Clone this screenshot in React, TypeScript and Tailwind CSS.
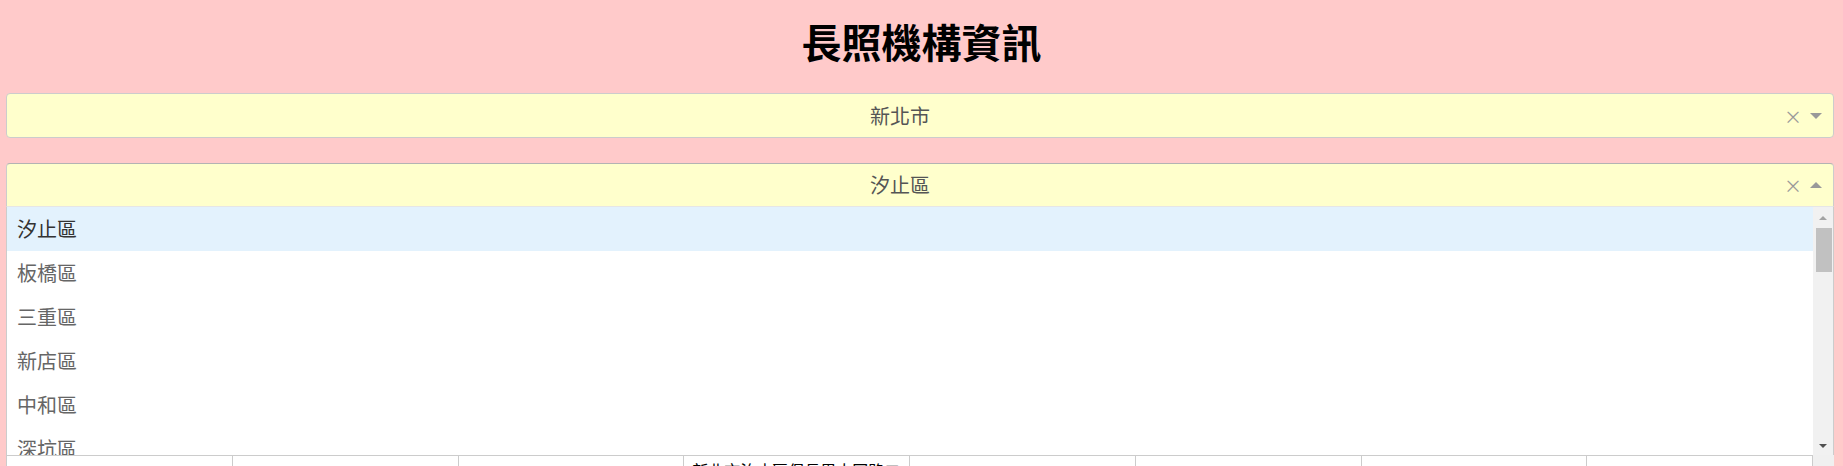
import React from "react";

const districts = [
  "汐止區", "板橋區", "三重區", "新店區", "中和區", "深坑區", "永和區", "土城區",
  "樹林區", "新莊區", "蘆洲區", "五股區", "泰山區", "林口區", "淡水區",
];

const rows = [
  ["A1234", "汐止長照中心", "居家服務", "新北市汐止區保長里大同路二段123號4樓", "02-2641-0000", "社團法人", "特約", "是"],
  ["A2345", "康寧日照中心", "日間照顧", "新北市汐止區康寧街100號", "02-2692-0000", "財團法人", "特約", "是"],
];

function ClearX() {
  return <span className="flex h-full w-[20px] items-center justify-center text-[18px] leading-none text-[#999]">×</span>;
}

function Arrow({ up }: { up?: boolean }) {
  return (
    <span className="flex h-full w-[25px] items-center justify-center">
      {up ? (
        <span className="h-0 w-0 border-x-[6px] border-b-[6px] border-x-transparent border-b-[#999]" />
      ) : (
        <span className="h-0 w-0 border-x-[6px] border-t-[6px] border-x-transparent border-t-[#999]" />
      )}
    </span>
  );
}

function Scrollbar() {
  return (
    <div className="flex w-[20px] flex-col bg-[#f1f1f1]">
      <div className="flex h-[21px] items-center justify-center">
        <span className="h-0 w-0 border-x-[4px] border-b-[4px] border-x-transparent border-b-[#a3a3a3]" />
      </div>
      <div className="ml-[3px] mr-[1px] h-[44px] bg-[#c1c1c1]" />
      <div className="flex-1" />
      <div className="flex h-[20px] items-center justify-center">
        <span className="h-0 w-0 border-x-[4px] border-t-[4px] border-x-transparent border-t-[#505050]" />
      </div>
    </div>
  );
}

export default function App() {
  return (
    <div className="min-h-screen bg-[#ffcaca] font-['Noto_Sans_CJK_TC','Noto_Sans_CJK_SC',sans-serif] text-[#333]">
      <h1 className="pt-[17px] mb-[28px] text-center text-[40px] leading-[48px] font-bold text-black">長照機構資訊</h1>

      <div className="ml-[6px] mr-[9px]">
        <div className="flex h-[45px] items-center rounded-[4px] border border-[#ccc] bg-[#ffffcc]">
          <div className="flex-1 pl-[10px] text-center text-[20px] text-[#555]">新北市</div>
          <ClearX />
          <Arrow />
          <span className="w-[5px]" />
        </div>

        <div className="relative mt-[25px]">
          <div className="flex h-[44px] items-center rounded-t-[4px] border border-[#b3b3b3] border-x-[#ccc] border-b-[#e6e6e6] bg-[#ffffcc]">
            <div className="flex-1 pl-[10px] text-center text-[20px] text-[#555]">汐止區</div>
            <ClearX />
            <Arrow up />
            <span className="w-[5px]" />
          </div>
          <div className="absolute left-0 right-0 top-full z-10 flex h-[250px] border-x border-b border-[#ccc] bg-white">
            <ul className="flex-1 overflow-hidden">
              {districts.map((d, i) => (
                <li
                  key={d}
                  className={
                    i === 0
                      ? "h-[44px] bg-[#e3f2fd] pl-[10px] text-[20px] leading-[44px] text-[#333]"
                      : "h-[44px] pl-[10px] text-[20px] leading-[44px] text-[#666]"
                  }
                >
                  {d}
                </li>
              ))}
            </ul>
            <Scrollbar />
          </div>
        </div>

        <div className="relative z-20 mt-[248px] flex">
          <div className="w-[1807px] bg-white">
            {rows.map((r, ri) => (
              <div key={ri} className="grid grid-cols-8 border-l border-t border-[#ccc]">
                {r.map((c, ci) => (
                  <div key={ci} className="flex items-center border-r border-b border-[#ccc] px-[8px] py-[4px] text-[16px] leading-[20px] text-black">
                    {c}
                  </div>
                ))}
              </div>
            ))}
          </div>
          <div className="flex-1 bg-[#f0f0f0]" />
        </div>
      </div>
    </div>
  );
}
